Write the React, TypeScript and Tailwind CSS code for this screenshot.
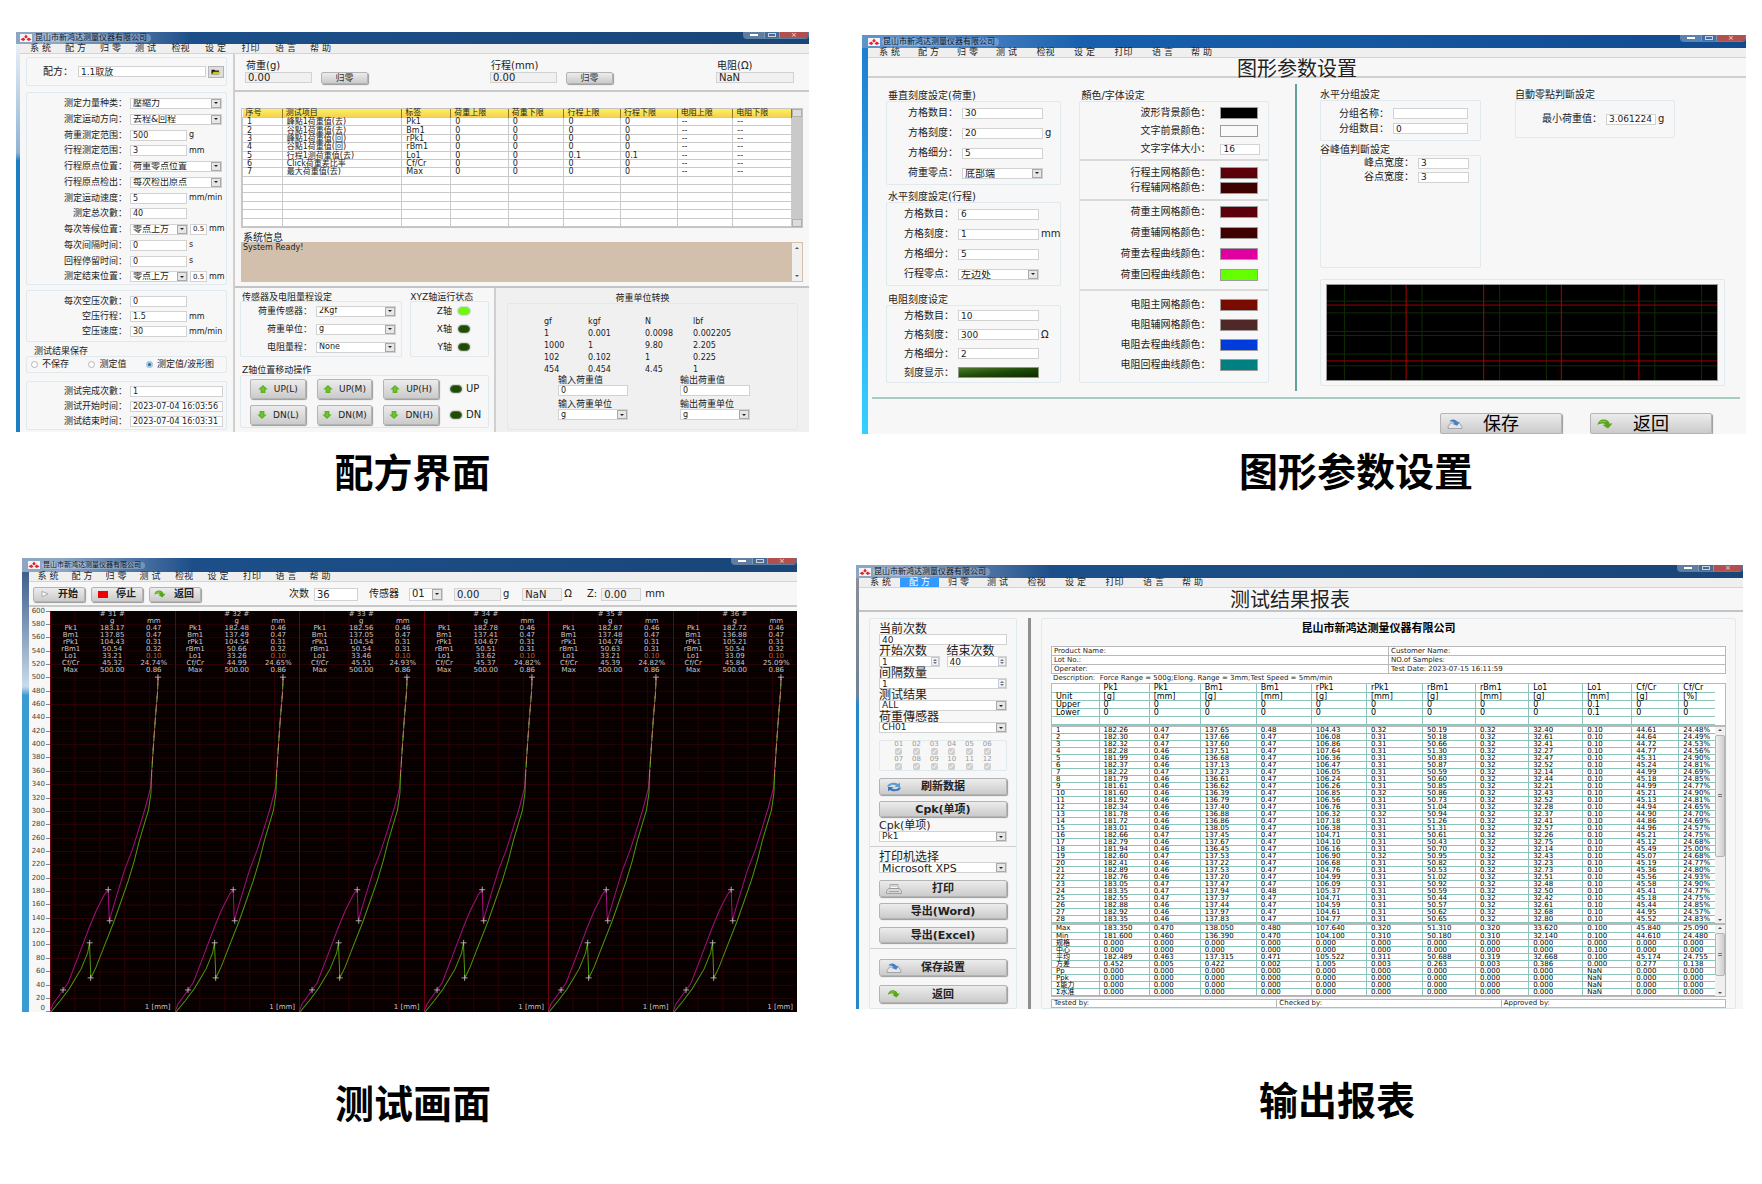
import type { ReactNode } from 'react';
import clsx from 'clsx';

const COMPANY = '昆山市新鸿达测量仪器有限公司';
const MENU = ['系 统', '配 方', '归 零', '测 试', '检视', '设 定', '打印', '语 言', '帮 助'];

/* ---------- icons ---------- */

const Logo = () => (
  <svg viewBox="0 0 12 8" className="h-2 w-3 shrink-0">
    <rect width="12" height="8" fill="#f3f3f6" />
    <path d="M6 0.5 7.8 3 6 4.6 4.2 3zM0.5 5.6 3.4 3.6 5.4 5.6 3.4 7zM11.5 5.6 8.6 3.6 6.6 5.6 8.6 7z" fill="#e0262c" />
  </svg>
);

const ArrowUp = () => (
  <svg viewBox="0 0 12 10" className="h-2 w-2.5 shrink-0">
    <path d="M6 0 12 5.5H9V10H3V5.5H0z" fill="#5fb321" />
    <path d="M6 2.5 8 5H7v3H5V5H4z" fill="#79c634" />
  </svg>
);

const ArrowDown = () => (
  <svg viewBox="0 0 12 10" className="h-2 w-2.5 shrink-0">
    <path d="M6 10 0 4.5h3V0h6v4.5h3z" fill="#5fb321" />
    <path d="M6 7.5 4 5h1V2h2v3h1z" fill="#79c634" />
  </svg>
);

const BackIcon = ({ className }: { className: string }) => (
  <svg viewBox="0 0 16 10" className={clsx('shrink-0', className)}>
    <path d="M0.5 6C1 1.500 5-0.5 9 .8c2.200.8 3.200 2.200 3.400 3.800L15.500 4.500 11 9.500 5.500 6 8.300 5.600C7.500 4 3.500 4 0.500 6z" fill="#58a618" />
    <path d="M2 4C4 1.500 8 1 10 3.300 7 2.500 4.500 2.800 2 4z" fill="#8fce55" />
  </svg>
);

const SaveIcon = ({ className }: { className: string }) => (
  <svg viewBox="0 0 16 11" className={clsx('shrink-0', className)}>
    <path d="M3 4.500h10l2.500 3.500v2.500H0.500V8z" fill="#e4e6ea" stroke="#7c838e" strokeWidth=".7" />
    <path d="M2 3C3 .3 7-.2 9.500 1.800L11 3.300 13 3 10.500 7.500 5.500 5.500 7.500 4.600C6 2.800 4 2.400 2 3z" fill="#4a7fc4" />
  </svg>
);

const RefreshIcon = () => (
  <svg viewBox="0 0 16 10" className="h-2.5 w-4 shrink-0">
    <path d="M1 4.500C2 .5 9-.5 12 2l2-1.300V5H8.500l1.800-1.300C8 2.200 4.500 2.500 3.500 4.500z" fill="#5b9bd8" />
    <path d="M15 5.500C14 9.500 7 10.500 4 8L2 9.300V5h5.500L5.700 6.300C8 7.800 11.500 7.500 12.500 5.500z" fill="#3a78bd" />
  </svg>
);

const PrinterIcon = () => (
  <svg viewBox="0 0 16 10" className="h-2.5 w-4 shrink-0">
    <path d="M4 .5h8v4H4z" fill="#fafafa" stroke="#8a8a8a" strokeWidth=".7" />
    <path d="M2.500 4.500h11L15.500 7v2.500H.5V7z" fill="#d9d9d9" stroke="#8a8a8a" strokeWidth=".7" />
    <path d="M5 2h6M3 7.500h10" stroke="#8a8a8a" strokeWidth=".7" />
  </svg>
);

const FolderIcon = () => (
  <svg viewBox="0 0 12 8" className="h-1.5 w-2.5">
    <path d="M0 1h4l1 1h5v5H0z" fill="#1c1c00" />
    <path d="M2.500 3.500H12L10 7H0.500z" fill="#c9c22a" />
  </svg>
);

/* ---------- shared controls ---------- */

type WindowProps = { menuItem: string; menuPad: string; barClass: string; edge: string; active?: number; title: string; children: ReactNode };

const Window = ({ menuItem, menuPad, barClass, edge, active, title, children }: WindowProps) => (
  <section className="overflow-hidden bg-[#f7f7f7]">
    <header className={clsx('flex items-center bg-linear-to-r', barClass)}>
      <Logo />
      <span className={clsx('ml-0.5 rounded-full bg-white/25 pr-1 pl-px whitespace-nowrap text-[#0b1526]', title)}>{COMPANY}</span>
      <div className="ml-auto flex h-[7px] self-start overflow-hidden rounded-b-sm border border-t-0 border-white/30">
        <button aria-label="最小化" className="flex w-5 items-center justify-center bg-white/30">
          <span className="h-0.5 w-2 bg-white" />
        </button>
        <button aria-label="最大化" className="flex w-4 items-center justify-center border-x border-white/30 bg-white/20">
          <span className="h-1 w-2 border border-white/70" />
        </button>
        <button aria-label="关闭" className="w-7 bg-[#b0504f] text-[7px] leading-[6px] text-white/80">
          ×
        </button>
      </div>
    </header>
    <div className="flex">
      <div className={clsx('shrink-0 bg-linear-to-b', edge)} />
      <div className="min-w-0 flex-1">
        <nav className={clsx('flex h-2.5 items-center border-b border-[#d4d4d4] bg-[#efefef] text-[9px] text-[#222]', menuPad)}>
          {MENU.map((item, i) => (
            <button key={item} className={clsx('h-full text-center whitespace-nowrap', menuItem, i === active && 'bg-[#3399ff] text-white')}>
              {item}
            </button>
          ))}
        </nav>
        {children}
      </div>
    </div>
  </section>
);

const Group = ({ className, children }: { className?: string; children?: ReactNode }) => (
  <div className={clsx('rounded-xs border border-[#e0eaee]', className)}>{children}</div>
);

const TextBox = ({ value, label, className = 'w-[57px]' }: { value: string; label?: string; className?: string }) => (
  <input
    defaultValue={value}
    aria-label={label}
    className={clsx('h-[11px] min-w-0 border border-[#d2d2d2] px-0.5', !className.includes('bg-') && 'bg-white', className)}
  />
);

const Combo = ({ value, label, className }: { value: string; label?: string; className?: string }) => (
  <span className={clsx('flex h-[11px] border border-[#d2d2d2] bg-white', className)}>
    <select aria-label={label} defaultValue={value} className="h-full min-w-0 flex-1 appearance-none bg-transparent pl-0.5">
      <option>{value}</option>
    </select>
    <span className="flex w-2.5 shrink-0 items-center justify-center border border-[#a9a9a9] bg-[#e6e6e6]">
      <span className="border-x-2 border-t-2 border-x-transparent border-t-[#222]" />
    </span>
  </span>
);

const Spin = ({ value, label, className }: { value: string; label: string; className?: string }) => (
  <span className={clsx('flex h-[11px] border border-[#d2d2d2] bg-white', className)}>
    <input aria-label={label} defaultValue={value} className="min-w-0 flex-1 px-0.5" />
    <span className="flex w-2 flex-col items-center justify-evenly border border-[#c4cbd6] bg-[#f0f2f5]">
      <span className="border-x-2 border-b-2 border-x-transparent border-b-[#6b7380]" />
      <span className="border-x-2 border-t-2 border-x-transparent border-t-[#6b7380]" />
    </span>
  </span>
);

const Field = ({ label, labelClass, rowClass, unit, children }: { label: string; labelClass: string; rowClass: string; unit?: string; children: ReactNode }) => (
  <label className={clsx('flex items-center whitespace-nowrap', rowClass)}>
    <span className={clsx('shrink-0 text-right', labelClass)}>{label}：</span>
    {children}
    {unit && <span className="ml-0.5">{unit}</span>}
  </label>
);

const PushButton = ({ className, children }: { className?: string; children: ReactNode }) => (
  <button
    className={clsx(
      'flex items-center rounded-xs border border-[#b4b4b4] bg-linear-to-b from-[#ececec] to-[#cbcbcb] whitespace-nowrap shadow-[1px_1px_1px_#9a9a9a]',
      className,
    )}
  >
    {children}
  </button>
);

const Led = ({ on }: { on?: boolean }) => (
  <span className={clsx('h-2 w-3 shrink-0 rounded-full border shadow-[0_0_1px_1px_#d8d8d8]', on ? 'border-[#8fdc5f] bg-[#66ff00]' : 'border-[#4f6a45] bg-[#1e4d00]')} />
);

/* ---------- recipe window ---------- */

type RecipeRow = { label: string; value: string; unit?: string; kind?: 'select' | 'combo' };

const RECIPE_ROWS: RecipeRow[] = [
  { label: '测定力量种类', value: '壓縮力', kind: 'select' },
  { label: '测定运动方向', value: '去程&回程', kind: 'select' },
  { label: '荷重测定范围', value: '500', unit: 'g' },
  { label: '行程测定范围', value: '3', unit: 'mm' },
  { label: '行程原点位置', value: '荷重零点位置', kind: 'select' },
  { label: '行程原点检出', value: '每次检出原点', kind: 'select' },
  { label: '测定运动速度', value: '5', unit: 'mm/min' },
  { label: '测定总次數', value: '40' },
  { label: '每次等候位置', value: '零点上方', unit: 'mm', kind: 'combo' },
  { label: '每次间隔时间', value: '0', unit: 's' },
  { label: '回程停留时间', value: '0', unit: 's' },
  { label: '测定结束位置', value: '零点上方', unit: 'mm', kind: 'combo' },
];

const AIR_ROWS: RecipeRow[] = [
  { label: '每次空压次數', value: '0' },
  { label: '空压行程', value: '1.5', unit: 'mm' },
  { label: '空压速度', value: '30', unit: 'mm/min' },
];

const DONE_ROWS = [
  ['测试完成次數', '1'],
  ['测试开始时间', '2023-07-04 16:03:56'],
  ['测试结束时间', '2023-07-04 16:03:31'],
];

const ITEM_HEAD = ['序号', '测试项目', '标签', '荷重上限', '荷重下限', '行程上限', '行程下限', '电阻上限', '电阻下限'];
const ITEM_COLS = ['w-10', 'w-[120px]', 'w-[49px]', 'w-[58px]', 'w-[56px]', 'w-[57px]', 'w-[57px]', 'w-[56px]', 'w-[59px]'];
const ITEMS = [
  ['1', '峰點1荷重值(去)', 'Pk1', '0', '0', '0', '0', '--', '--'],
  ['2', '谷點1荷重值(去)', 'Bm1', '0', '0', '0', '0', '--', '--'],
  ['3', '峰點1荷重值(回)', 'rPk1', '0', '0', '0', '0', '--', '--'],
  ['4', '谷點1荷重值(回)', 'rBm1', '0', '0', '0', '0', '--', '--'],
  ['5', '行程1测荷重值(去)', 'Lo1', '0', '0', '0.1', '0.1', '--', '--'],
  ['6', 'Click荷重差比率', 'Cf/Cr', '0', '0', '0', '0', '--', '--'],
  ['7', '最大荷重值(去)', 'Max', '0', '0', '0', '0', '--', '--'],
  ...Array.from({ length: 6 }, () => Array<string>(9).fill('\u00a0')),
];

const UNITS = [
  ['1', '0.001', '0.0098', '0.002205'],
  ['1000', '1', '9.80', '2.205'],
  ['102', '0.102', '1', '0.225'],
  ['454', '0.454', '4.45', '1'],
];

const RecipeField = ({ row, rowClass }: { row: RecipeRow; rowClass: string }) => (
  <Field label={row.label} labelClass="w-[100px] mr-[3px] text-[9px]" rowClass={rowClass} unit={row.unit}>
    {row.kind === 'select' && <Combo value={row.value} className="w-[92px] text-[9px]" />}
    {row.kind === 'combo' && (
      <>
        <Combo value={row.value} className="w-[58px] text-[9px]" />
        <TextBox value="0.5" label={`${row.label}值`} className="ml-0.5 w-[17px] text-[7px]" />
      </>
    )}
    {!row.kind && <TextBox value={row.value} />}
  </Field>
);

const Reading = ({ label, value, zero, box }: { label: string; value: string; zero?: boolean; box: string }) => (
  <div>
    <label>
      <span className="flex h-2.5 items-center pl-px text-[10px]">{label}</span>
      <TextBox value={value} className={clsx('mt-px h-3 bg-[#f0f0f0] text-[10px]', box)} />
    </label>
    {zero && (
      <button className="mt-px ml-[9px] h-3 w-[47px] rounded-xs border border-[#b4b4b4] bg-linear-to-b from-[#ececec] to-[#cbcbcb] align-top text-[9px] leading-[10px] text-[#333] shadow-[1px_1px_1px_#9a9a9a]">
        归零
      </button>
    )}
  </div>
);

const RecipeWindow = () => (
  <Window
    edge="w-1 from-[#e9eff6] via-[#8fb3d6] via-28% to-[#1c7fc4] to-30%"
    barClass="h-3 pl-1 from-[#8ea6c4] from-5% via-[#1c4f8a] via-22% to-[#1a4677]"
    title="text-[8px]"
    menuPad="pl-[3px]"
    menuItem="w-[35px]"
  >
    <div className="grid grid-cols-[213fr_576fr] text-[8px] text-[#222]">
      <div className="px-1.5 pt-[3px] pb-0.5">
        <Group className="flex h-[29px] items-center pl-4">
          <Field label="配方" labelClass="text-[10px] w-[30px] mr-[5px]" rowClass="">
            <TextBox value="1.1取放" className="w-[128px] text-[9px]" />
          </Field>
          <button aria-label="打开配方" className="ml-0.5 flex h-3 w-4 items-center justify-center border border-[#b4b4b4] bg-[#dedede]">
            <FolderIcon />
          </button>
        </Group>
        <Group className="mt-1.5 pt-0.5">
          {RECIPE_ROWS.map((row, i) => (
            <RecipeField key={row.label} row={row} rowClass={i % 4 === 3 ? 'h-[15px]' : 'h-4'} />
          ))}
        </Group>
        <Group className="mt-[5px] pt-[3px] pb-0.5">
          {AIR_ROWS.map((row) => (
            <RecipeField key={row.label} row={row} rowClass="h-[15px]" />
          ))}
        </Group>
        <p className="mt-1 flex h-2.5 items-center pl-2 text-[9px]">测试结果保存</p>
        <Group className="flex h-[17px] items-center justify-between pr-3 pl-1 text-[9px]">
          {['不保存', '测定值', '测定值/波形图'].map((name, i) => (
            <label key={name} className="flex items-center gap-1">
              <input
                type="radio"
                name="save"
                defaultChecked={i === 2}
                className="size-[7px] appearance-none rounded-full border border-[#b5b5b5] bg-white checked:border-2 checked:border-[#a9c8dc] checked:bg-[#176fa5]"
              />
              {name}
            </label>
          ))}
        </Group>
        <Group className="mt-2 pt-0.5">
          {DONE_ROWS.map(([label, value]) => (
            <Field key={label} label={label} labelClass="w-[100px] mr-[3px] text-[9px]" rowClass="h-[15px]">
              <TextBox value={value} className="w-[93px]" />
            </Field>
          ))}
        </Group>
      </div>

      <div className="flex flex-col border-l-2 border-[#cfcfcf]">
        <div className="grid h-[38px] grid-cols-[245fr_226fr_93fr] border-b-2 border-[#c9c9c9] pt-[7px] pl-2.5">
          <Reading label="荷重(g)" value="0.00" zero box="w-[67px]" />
          <Reading label="行程(mm)" value="0.00" zero box="w-[67px]" />
          <Reading label="电阻(Ω)" value="NaN" box="w-[78px]" />
        </div>
        <div className="border-b-2 border-[#c4c4c4] px-1.5 pt-4 pb-1">
          <div className="flex border border-[#c4c4c4]">
            <table className="h-[118px] flex-1 table-fixed border-collapse bg-white">
              <thead>
                <tr className="bg-linear-to-b from-[#fff05a] to-[#f3cf52] text-left">
                  {ITEM_HEAD.map((head, i) => (
                    <th key={head} className={clsx('border-r border-[#8c7a2a] p-0 pl-[3px] leading-2 font-normal', ITEM_COLS[i])}>
                      {head}
                    </th>
                  ))}
                </tr>
              </thead>
              <tbody>
                {ITEMS.map((row, r) => (
                  <tr key={r}>
                    {row.map((cell, i) => (
                      <td key={i} className="border border-[#c9c9c9] p-0 pl-1 leading-[7px] whitespace-nowrap">
                        {cell}
                      </td>
                    ))}
                  </tr>
                ))}
              </tbody>
            </table>
            <div className="flex w-2.5 shrink-0 flex-col justify-between bg-[#c9c9c9]">
              <span className="h-2 border border-[#b0b0b0] bg-[#dcdcdc]" />
              <span className="h-2 border border-[#b0b0b0] bg-[#dcdcdc]" />
            </div>
          </div>
          <label>
            <span className="mt-[5px] flex h-[9px] items-center pl-0.5 text-[10px]">系统信息</span>
            <span className="flex h-10">
              <textarea readOnly value="System Ready!" className="flex-1 resize-none bg-[#d2bfac] p-0.5" />
              <span className="flex w-3 flex-col items-center justify-between border border-[#d2bfac] bg-[#f0f0f0] py-1">
                <span className="border-x-2 border-b-2 border-x-transparent border-b-[#555]" />
                <span className="border-x-2 border-t-2 border-x-transparent border-t-[#555]" />
              </span>
            </span>
          </label>
        </div>

        <div className="grid flex-1 grid-cols-[259fr_315fr]">
          <div className="px-[5px] pt-[5px] pb-0.5">
            <div className="grid grid-cols-[161fr_78fr] gap-x-2">
              <div>
                <p className="h-2 pl-0.5 text-[9px]">传感器及电阻量程设定</p>
                <Group>
                  {[
                    ['荷重传感器', '2Kgf'],
                    ['荷重单位', 'g'],
                    ['电阻量程', 'None'],
                  ].map(([label, value]) => (
                    <Field key={label} label={label} labelClass="w-[71px] mr-1 text-[9px]" rowClass="h-[18px]">
                      <Combo value={value} className="w-20" />
                    </Field>
                  ))}
                </Group>
              </div>
              <div>
                <p className="h-2 text-[9px] whitespace-nowrap">XYZ轴运行状态</p>
                <Group>
                  {['Z轴', 'X轴', 'Y轴'].map((axis) => (
                    <div key={axis} className="flex h-[18px] items-center justify-end gap-1.5 pr-[18px] text-[9px]">
                      {axis}
                      <Led on={axis === 'Z轴'} />
                    </div>
                  ))}
                </Group>
              </div>
            </div>
            <p className="mt-[9px] flex h-[9px] items-center pl-0.5 text-[9px]">Z轴位置移动操作</p>
            <Group className="flex flex-col gap-1.5 pt-[3px] pb-0.5 pl-[9px]">
              {['UP', 'DN'].map((dir) => (
                <div key={dir} className="flex items-center gap-[11px]">
                  {['L', 'M', 'H'].map((speed) => (
                    <PushButton key={speed} className="h-5 flex-1 justify-center gap-1.5 text-[9px]">
                      {dir === 'UP' ? <ArrowUp /> : <ArrowDown />}
                      {`${dir}(${speed})`}
                    </PushButton>
                  ))}
                  <span className="flex w-[38px] items-center gap-1 text-[10px]">
                    <Led />
                    {dir}
                  </span>
                </div>
              ))}
            </Group>
          </div>

          <div className="flex flex-col border-l-2 border-[#cfcfcf] bg-[#f0f0f0] px-[11px] pt-1.5 pb-0.5">
            <p className="h-[9px] pr-5 text-center text-[9px]">荷重单位转换</p>
            <Group className="flex-1 pt-3">
              <table className="ml-[36px] table-fixed border-collapse text-left">
                <thead>
                  <tr className="h-3">
                    <th className="w-11 p-0 font-normal">gf</th>
                    <th className="w-[57px] p-0 font-normal">kgf</th>
                    <th className="w-12 p-0 font-normal">N</th>
                    <th className="w-[60px] p-0 font-normal">lbf</th>
                  </tr>
                </thead>
                <tbody>
                  {UNITS.map((row) => (
                    <tr key={row[0]} className="h-3">
                      {row.map((cell, i) => (
                        <td key={i} className="p-0">
                          {cell}
                        </td>
                      ))}
                    </tr>
                  ))}
                </tbody>
              </table>
              <div className="grid grid-cols-[123fr_118fr] pl-[50px]">
                {['输入', '輸出'].map((side) => (
                  <div key={side}>
                    <label>
                      <span className="flex h-[9px] items-center text-[9px]">{side}荷重值</span>
                      <TextBox value="0" className="block w-[70px]" />
                    </label>
                    <label>
                      <span className="mt-1 flex h-[9px] items-center text-[9px]">{side}荷重单位</span>
                      <Combo value="g" className="w-[70px]" />
                    </label>
                  </div>
                ))}
              </div>
            </Group>
          </div>
        </div>
      </div>
    </div>
  </Window>
);

/* ---------- graph settings window ---------- */

const COLOR_SECTIONS = [
  {
    box: 'pt-0.5 pb-px',
    row: 'h-[18px]',
    rows: [
      ['波形背景颜色', 'bg-black'],
      ['文字前景颜色', 'bg-[#fafafa]'],
      ['文字字体大小', ''],
    ],
  },
  {
    box: 'border-t-2 pt-1 pb-1',
    row: 'h-[15px]',
    rows: [
      ['行程主网格颜色', 'bg-[#5c000c]'],
      ['行程辅网格颜色', 'bg-[#3f0000]'],
    ],
  },
  {
    box: 'border-t-2 pb-1',
    row: 'h-[21px]',
    rows: [
      ['荷重主网格颜色', 'bg-[#5c000c]'],
      ['荷重辅网格颜色', 'bg-[#3f0000]'],
      ['荷重去程曲线颜色', 'bg-[#e000a0]'],
      ['荷重回程曲线颜色', 'bg-[#66ff00]'],
    ],
  },
  {
    box: 'border-t-2 pt-1 pb-[7px]',
    row: 'h-5',
    rows: [
      ['电阻主网格颜色', 'bg-[#780c00]'],
      ['电阻辅网格颜色', 'bg-[#502828]'],
      ['电阻去程曲线颜色', 'bg-[#003cdc]'],
      ['电阻回程曲线颜色', 'bg-[#008080]'],
    ],
  },
];

const ScaleGroup = ({ title, zero, values, unit, narrow }: { title: string; zero: [string, string]; values: string[]; unit: string; narrow: string }) => (
  <>
    <p className="flex h-2.5 items-center pl-0.5">{title}</p>
    <Group className="py-px">
      {['方格数目', '方格刻度', '方格细分'].map((name, i) => (
        <Field key={name} label={name} labelClass={narrow} rowClass="h-5" unit={i === 1 ? unit : undefined}>
          <TextBox value={values[i]} className="w-[81px] text-[9px]" />
        </Field>
      ))}
      <Field label={zero[0]} labelClass={narrow} rowClass="h-5">
        <Combo value={zero[1]} className="w-[81px]" />
      </Field>
    </Group>
  </>
);

const GridPreview = () => (
  <svg viewBox="0 0 392 97" preserveAspectRatio="none" className="block h-[97px] w-full border border-[#9a9a9a] bg-black">
    <path
      d="M17.500 0V97M64.500 0V97M95.500 0V97M173.500 0V97M220.500 0V97M298.500 0V97M329.500 0V97M376.500 0V97M0 16.500H392M0 28.500H392M0 47.500H392M0 51.500H392M0 70.500H392M0 82.500H392"
      stroke="#0f2e00"
    />
    <path d="M79.500 0V97M157.500 0V97M235.500 0V97M313.500 0V97" stroke="#b40000" />
    <path d="M0 20.500H392M0 77.500H392" stroke="#a00000" />
  </svg>
);

const GraphWindow = () => (
  <Window
    edge="w-1.5 from-[#1f7fd0] via-[#2ba6ea] to-[#35d0ff]"
    barClass="h-[13px] pl-1.5 from-[#5f93cc] from-5% via-[#1660ae] via-25% to-[#124a8e]"
    title="text-[8px]"
    menuPad="pl-0.5"
    menuItem="w-[39px]"
  >
    <h2 className="flex h-5 items-center justify-center border-b-2 border-[#d0d0d0] pt-1 pr-5 text-xl leading-none text-[#222]">图形参数设置</h2>
    <div className="grid grid-cols-[192fr_216fr_452fr] pt-1.5 pl-[18px] text-[10px] text-[#222]">
      <div className="pt-[7px] pr-[18px]">
        <ScaleGroup title="垂直刻度設定(荷重)" values={['30', '20', '5']} unit="g" zero={['荷重零点', '底部端']} narrow="w-[71px] mr-1" />
        <div className="mt-[7px]" />
        <ScaleGroup title="水平刻度設定(行程)" values={['6', '1', '5']} unit="mm" zero={['行程零点', '左边处']} narrow="w-[67px] mr-1" />
        <p className="mt-[9px] flex h-2.5 items-center pl-0.5">电阻刻度设定</p>
        <Group>
          {[
            ['方格数目', '10'],
            ['方格刻度', '300'],
            ['方格细分', '2'],
          ].map(([name, value], i) => (
            <Field key={name} label={name} labelClass="w-[67px] mr-1" rowClass="h-[19px]" unit={i === 1 ? 'Ω' : undefined}>
              <TextBox value={value} className="w-[81px] text-[9px]" />
            </Field>
          ))}
          <Field label="刻度显示" labelClass="w-[67px] mr-1" rowClass="h-[19px]">
            <button aria-label="刻度显示" className="h-[11px] w-[81px] border border-[#8a9a80] bg-linear-to-br from-[#4d7a2c] via-[#1f4a0a] to-[#102a02]" />
          </Field>
        </Group>
      </div>

      <div className="pt-[7px] pr-[26px]">
        <p className="flex h-2.5 items-center pl-0.5">顏色/字体设定</p>
        <Group>
          {COLOR_SECTIONS.map((section) => (
            <div key={section.row} className={clsx('border-[#dadada]', section.box)}>
              {section.rows.map(([name, swatch]) => (
                <Field key={name} label={name} labelClass="w-[130px] mr-2.5" rowClass={section.row}>
                  {swatch ? (
                    <button aria-label={name} className={clsx('h-3 w-[38px] border border-[#9c9c9c]', swatch)} />
                  ) : (
                    <TextBox value="16" className="w-10 text-[9px]" />
                  )}
                </Field>
              ))}
            </div>
          ))}
        </Group>
      </div>

      <div className="border-l-2 border-[#63a097] pt-1.5 pr-[21px] pb-[5px] pl-[23px]">
        <div className="mr-[50px] grid grid-cols-[161fr_160fr] gap-x-[34px]">
          <div>
            <p className="flex h-2.5 items-center">水平分组設定</p>
            <Group className="pt-[5px] pb-1">
              <Field label="分组名称" labelClass="w-[68px] mr-1" rowClass="h-[15px]">
                <TextBox value="" className="w-[75px] text-[9px]" />
              </Field>
              <Field label="分组数目" labelClass="w-[68px] mr-1" rowClass="h-[15px]">
                <TextBox value="0" className="w-[75px] text-[9px]" />
              </Field>
            </Group>
            <p className="mt-1 flex h-2.5 items-center">谷峰值判斷設定</p>
            <Group className="h-[113px]">
              <Field label="峰点宽度" labelClass="w-[93px] mr-1" rowClass="h-3.5">
                <TextBox value="3" className="w-[51px] text-[9px]" />
              </Field>
              <Field label="谷点宽度" labelClass="w-[93px] mr-1" rowClass="h-3.5">
                <TextBox value="3" className="w-[51px] text-[9px]" />
              </Field>
            </Group>
          </div>
          <div>
            <p className="flex h-2.5 items-center">自動零點判斷設定</p>
            <Group className="flex h-[38px] items-center">
              <Field label="最小荷重值" labelClass="w-[86px] mr-1" rowClass="" unit="g">
                <TextBox value="3.061224" className="w-[50px] text-[9px]" />
              </Field>
            </Group>
          </div>
        </div>
        <Group className="mt-[11px] py-1 pr-1.5 pl-[5px]">
          <GridPreview />
        </Group>
      </div>
    </div>
    <hr className="mt-1.5 mr-1.5 ml-1 border-t-2 border-[#a9cbc6]" />
    <div className="flex justify-end gap-7 pt-3.5 pr-[34px]">
      <PushButton className="h-[21px] w-[122px] gap-5 pl-1.5 text-lg leading-none">
        <SaveIcon className="h-2.5 w-4" />
        保存
      </PushButton>
      <PushButton className="h-[21px] w-[122px] gap-5 pl-1.5 text-lg leading-none">
        <BackIcon className="h-2.5 w-4" />
        返回
      </PushButton>
    </div>
  </Window>
);

/* ---------- test window ---------- */

const SHOTS = [
  { no: 31, g: ['183.17', '137.85', '104.43', '50.54', '33.21', '45.32', '500.00'], mm: ['0.47', '0.47', '0.31', '0.32', '0.10', '24.74%', '0.86'] },
  { no: 32, g: ['182.48', '137.49', '104.54', '50.66', '33.26', '44.99', '500.00'], mm: ['0.46', '0.47', '0.31', '0.32', '0.10', '24.65%', '0.86'] },
  { no: 33, g: ['182.56', '137.05', '104.54', '50.54', '33.46', '45.51', '500.00'], mm: ['0.46', '0.47', '0.31', '0.31', '0.10', '24.93%', '0.86'] },
  { no: 34, g: ['182.78', '137.41', '104.67', '50.51', '33.62', '45.37', '500.00'], mm: ['0.46', '0.47', '0.31', '0.31', '0.10', '24.82%', '0.86'] },
  { no: 35, g: ['182.87', '137.48', '104.76', '50.63', '33.21', '45.39', '500.00'], mm: ['0.46', '0.47', '0.31', '0.31', '0.10', '24.82%', '0.86'] },
  { no: 36, g: ['182.72', '136.88', '105.21', '50.54', '33.09', '45.84', '500.00'], mm: ['0.46', '0.47', '0.31', '0.32', '0.10', '25.09%', '0.86'] },
];
const SHOT_LABELS = ['Pk1', 'Bm1', 'rPk1', 'rBm1', 'Lo1', 'Cf/Cr', 'Max'];
const TICKS = Array.from({ length: 31 }, (_, i) => 600 - i * 20);
const MARKS = [[13, 378], [58, 278], [59.5, 309], [39.5, 331], [40.5, 366], [107.5, 66]];

const Curve = () => (
  <svg viewBox="0 0 124 400" preserveAspectRatio="none" className="absolute inset-0 size-full" fill="none">
    {Array.from({ length: 150 }, (_, i) => (
      <line key={i} x1="0" x2="124" y1={(i * 8) / 3} y2={(i * 8) / 3} stroke={i % 5 ? '#130000' : '#2e0005'} strokeWidth={i % 5 ? 0.8 : 1} />
    ))}
    <path d="M24.800 0V400M49.600 0V400M74.400 0V400M99.200 0V400" stroke="#2e0004" />
    <path d="M0.500 0V400" stroke="#70000f" />
    <path
      d="M0 400 3 392 13 378 18 371 28 345 39 316 46 299 54 283 58 278 59 309 64 292 74 259 82 238 88 219 95 196 100 177 102.700 139 105 106 107 82 107.700 66"
      stroke="#a3107c"
    />
    <path
      d="M1 400 10 389 19 377 25 367 31 357 37.500 341 39.300 331 40.700 366 46 355 51 342 64 309 71 289 78 269 84 249 89 229 98 199 100.500 182 101 169"
      stroke="#4b9a08"
    />
    <path d="M101 169 102.700 139 105 106 107 82 107.700 66" stroke="#3fae08" strokeDasharray="6 7" />
    <path d="M101 165 102.700 139 105 106 107 82 107.700 66" stroke="#a88a4e" strokeDasharray="7 6" />
    {MARKS.map(([x, y]) => (
      <path key={y} d={`M${x - 3} ${y}h6M${x} ${y - 3}v6`} stroke="#c9c9c9" strokeWidth=".8" />
    ))}
  </svg>
);

const TestWindow = () => (
  <Window
    edge="w-[7px] from-[#3f5f8a] via-[#c9dcea] via-26% to-[#3a9ad2] to-28%"
    barClass="h-3.5 pl-1.5 from-[#8ea6c4] from-5% via-[#1c4f8a] via-22% to-[#1a4677]"
    title="text-[7px]"
    menuPad="pl-0.5"
    menuItem="w-[34px]"
  >
    <div className="flex h-[25px] items-center border-b-2 border-[#c9c9c9] pt-px pl-1 text-[10px] whitespace-nowrap text-[#222]">
      <PushButton className="h-[15px] w-[52px] gap-2 pl-1.5 font-bold">
        <svg viewBox="0 0 10 8" className="h-1.5 w-2.5 shrink-0">
          <path d="M1 .5 9 4 1 7.500z" fill="#fafafa" stroke="#9a9a9a" />
        </svg>
        开始
      </PushButton>
      <PushButton className="ml-1.5 h-[15px] w-[52px] gap-2 pl-1.5 font-bold">
        <span className="h-[7px] w-2.5 bg-[#f00000]" />
        停止
      </PushButton>
      <PushButton className="ml-1.5 h-[15px] w-[52px] gap-2 pl-1 font-bold">
        <BackIcon className="h-2 w-3" />
        返回
      </PushButton>
      <label className="ml-[88px] flex items-center gap-[5px]">
        次数
        <TextBox value="36" className="h-[13px] w-11" />
      </label>
      <label className="ml-[11px] flex items-center gap-2.5">
        传感器
        <Combo value="01" className="h-[13px] w-[34px]" />
      </label>
      <label className="ml-[11px] flex items-center gap-0.5">
        <TextBox value="0.00" className="h-[13px] w-[47px] bg-[#f0f0f0]" />g
      </label>
      <label className="ml-[13px] flex items-center gap-0.5">
        <TextBox value="NaN" className="h-[13px] w-10 bg-[#f0f0f0]" />Ω
      </label>
      <label className="ml-[15px] flex items-center gap-1">
        Z:
        <TextBox value="0.00" className="h-[13px] w-10 bg-[#f0f0f0]" />
        mm
      </label>
    </div>
    <div className="mt-1 flex h-[401px]">
      <div className="flex w-[21px] shrink-0 flex-col justify-between text-[7px] text-[#444]">
        {TICKS.map((tick) => (
          <div key={tick} className="flex h-0 items-center justify-end gap-px last:items-end">
            {tick}
            <span className="h-px w-1 bg-[#888]" />
          </div>
        ))}
      </div>
      <div className="grid flex-1 grid-cols-6 bg-[#050000]">
        {SHOTS.map((shot) => (
          <div key={shot.no} className="relative flex flex-col justify-between text-[7px] text-[#c8c8c8]">
            <Curve />
            <table className="relative w-full table-fixed border-collapse text-center leading-[7px]">
              <thead>
                <tr>
                  <th colSpan={3} className="p-0 font-normal">
                    # {shot.no} #
                  </th>
                </tr>
                <tr>
                  <th className="p-0" />
                  <th className="p-0 font-normal">g</th>
                  <th className="p-0 font-normal">mm</th>
                </tr>
              </thead>
              <tbody>
                {SHOT_LABELS.map((name, i) => (
                  <tr key={name}>
                    <th className="p-0 font-normal">{name}</th>
                    <td className="p-0">{shot.g[i]}</td>
                    <td className={clsx('p-0', name === 'Lo1' && 'text-[#c85a14]')}>{shot.mm[i]}</td>
                  </tr>
                ))}
              </tbody>
            </table>
            <p className="relative pr-1 pb-px text-right">1 [mm]</p>
          </div>
        ))}
      </div>
    </div>
  </Window>
);

/* ---------- report window ---------- */

const REPORT_COLS = ['w-[47px]', 'w-[50px]', 'w-[51px]', 'w-[56px]', 'w-[55px]', 'w-[55px]', 'w-[56px]', 'w-[53px]', 'w-[53px]', 'w-[54px]', 'w-[49px]', 'w-[47px]', 'w-[36px]'];

const parse = (text: string) =>
  text
    .trim()
    .split('\n')
    .map((line) => line.trim().split(' '));

const REPORT_HEAD = [
  ['', 'Pk1', 'Pk1', 'Bm1', 'Bm1', 'rPk1', 'rPk1', 'rBm1', 'rBm1', 'Lo1', 'Lo1', 'Cf/Cr', 'Cf/Cr'],
  ['Unit', '[g]', '[mm]', '[g]', '[mm]', '[g]', '[mm]', '[g]', '[mm]', '[g]', '[mm]', '[g]', '[%]'],
  ['Upper', '0', '0', '0', '0', '0', '0', '0', '0', '0', '0.1', '0', '0'],
  ['Lower', '0', '0', '0', '0', '0', '0', '0', '0', '0', '0.1', '0', '0'],
  Array<string>(13).fill(''),
];

const REPORT_ROWS = parse(`
  1 182.26 0.47 137.65 0.48 104.43 0.32 50.19 0.32 32.40 0.10 44.61 24.48%
  2 182.30 0.47 137.66 0.47 106.08 0.31 50.18 0.32 32.61 0.10 44.64 24.49%
  3 182.32 0.47 137.60 0.47 106.86 0.31 50.66 0.32 32.41 0.10 44.72 24.53%
  4 182.28 0.46 137.51 0.47 107.64 0.31 51.30 0.32 32.27 0.10 44.77 24.56%
  5 181.99 0.46 136.68 0.47 106.36 0.31 50.83 0.32 32.47 0.10 45.31 24.90%
  6 182.37 0.46 137.13 0.47 106.47 0.31 50.87 0.32 32.52 0.10 45.24 24.81%
  7 182.22 0.47 137.23 0.47 106.05 0.31 50.59 0.32 32.14 0.10 44.99 24.69%
  8 181.79 0.46 136.61 0.47 106.24 0.31 50.60 0.32 32.44 0.10 45.18 24.85%
  9 181.61 0.46 136.62 0.47 106.26 0.31 50.85 0.32 32.21 0.10 44.99 24.77%
  10 181.60 0.46 136.39 0.47 106.85 0.32 50.86 0.32 32.43 0.10 45.21 24.90%
  11 181.92 0.46 136.79 0.47 106.56 0.31 50.73 0.32 32.52 0.10 45.13 24.81%
  12 182.34 0.46 137.40 0.47 106.76 0.31 51.04 0.32 32.28 0.10 44.94 24.65%
  13 181.78 0.46 136.88 0.47 106.32 0.32 50.94 0.32 32.37 0.10 44.90 24.70%
  14 181.72 0.46 136.86 0.47 107.18 0.31 51.26 0.32 32.41 0.10 44.86 24.69%
  15 183.01 0.46 138.05 0.47 106.38 0.31 51.31 0.32 32.57 0.10 44.96 24.57%
  16 182.66 0.47 137.45 0.47 104.71 0.31 50.61 0.32 32.26 0.10 45.21 24.75%
  17 182.79 0.46 137.67 0.47 104.10 0.31 50.43 0.32 32.75 0.10 45.12 24.68%
  18 181.94 0.46 136.45 0.47 106.16 0.31 50.70 0.32 32.14 0.10 45.49 25.00%
  19 182.60 0.47 137.53 0.47 106.90 0.32 50.95 0.32 32.43 0.10 45.07 24.68%
  20 182.41 0.46 137.22 0.47 106.68 0.31 50.82 0.32 32.23 0.10 45.19 24.77%
  21 182.89 0.46 137.53 0.47 104.76 0.31 50.53 0.32 32.73 0.10 45.36 24.80%
  22 182.76 0.46 137.20 0.47 104.99 0.31 51.02 0.32 32.51 0.10 45.56 24.93%
  23 183.05 0.47 137.47 0.47 106.09 0.31 50.92 0.32 32.48 0.10 45.58 24.90%
  24 183.35 0.47 137.94 0.48 105.37 0.31 50.59 0.32 32.50 0.10 45.41 24.77%
  25 182.55 0.47 137.37 0.47 104.71 0.31 50.44 0.32 32.42 0.10 45.18 24.75%
  26 182.88 0.46 137.44 0.47 104.59 0.31 50.57 0.32 32.61 0.10 45.44 24.85%
  27 182.92 0.46 137.97 0.47 104.61 0.31 50.62 0.32 32.68 0.10 44.95 24.57%
  28 183.35 0.46 137.83 0.47 104.77 0.31 50.65 0.32 32.80 0.10 45.52 24.83%
`);

const REPORT_STATS = parse(`
  Max 183.350 0.470 138.050 0.480 107.640 0.320 51.310 0.320 33.620 0.100 45.840 25.090
  Min 181.600 0.460 136.390 0.470 104.100 0.310 50.180 0.310 32.140 0.100 44.610 24.480
  规格 0.000 0.000 0.000 0.000 0.000 0.000 0.000 0.000 0.000 0.000 0.000 0.000
  中心 0.000 0.000 0.000 0.000 0.000 0.000 0.000 0.000 0.000 0.100 0.000 0.000
  平均 182.489 0.463 137.315 0.471 105.522 0.311 50.688 0.319 32.668 0.100 45.174 24.755
  方差 0.452 0.005 0.422 0.002 1.005 0.003 0.263 0.003 0.386 0.000 0.277 0.138
  Pp 0.000 0.000 0.000 0.000 0.000 0.000 0.000 0.000 0.000 NaN 0.000 0.000
  Ppk 0.000 0.000 0.000 0.000 0.000 0.000 0.000 0.000 0.000 NaN 0.000 0.000
  Σ能力 0.000 0.000 0.000 0.000 0.000 0.000 0.000 0.000 0.000 NaN 0.000 0.000
  Σ水准 0.000 0.000 0.000 0.000 0.000 0.000 0.000 0.000 0.000 NaN 0.000 0.000
`);

const ReportTable = ({ rows, cell, thumb }: { rows: string[][]; cell: string; thumb?: string }) => (
  <div className="flex border border-[#b9b9bd] bg-white text-black">
    <table className="w-0 flex-1 table-fixed border-collapse">
      <colgroup>
        {REPORT_COLS.map((width, i) => (
          <col key={i} className={width} />
        ))}
      </colgroup>
      <tbody>
        {rows.map((row, r) => (
          <tr key={r}>
            {row.map((value, i) => (
              <td key={i} className={clsx('border-b border-[#8cc4bb] p-0 pl-1 whitespace-nowrap', i > 0 && 'border-l', cell)}>
                {value}
              </td>
            ))}
          </tr>
        ))}
      </tbody>
    </table>
    {thumb ? (
      <div className="flex w-2.5 shrink-0 flex-col items-center bg-[#f0f0f0] py-0.5">
        <span className="border-x-2 border-b-2 border-x-transparent border-b-[#555]" />
        <span className={clsx('mt-1 flex w-full flex-col items-center justify-center gap-px rounded-xs border border-[#b5b5b5] bg-linear-to-r from-[#f0f0f0] to-[#cfcfcf]', thumb)}>
          <span className="h-px w-1 bg-[#777]" />
          <span className="h-px w-1 bg-[#777]" />
        </span>
        <span className="mt-auto border-x-2 border-t-2 border-x-transparent border-t-[#555]" />
      </div>
    ) : (
      <div className="w-2.5 shrink-0" />
    )}
  </div>
);

const SideLabel = ({ text }: { text: string }) => <span className="flex h-[11px] items-center text-xs leading-none">{text}</span>;

const SideButton = ({ icon, text, className }: { icon?: ReactNode; text: string; className: string }) => (
  <PushButton className={clsx('w-full px-1.5 text-[11px] font-bold', className)}>
    {icon}
    <span className={clsx('flex-1 text-center', icon && 'pr-4')}>{text}</span>
  </PushButton>
);

const ReportSidebar = () => (
  <Group className="w-[148px] shrink-0 px-[9px] pt-1 pb-[5px] text-[9px]">
    <label>
      <SideLabel text="当前次数" />
      <TextBox value="40" className="block w-full" />
    </label>
    <div className="grid grid-cols-2 gap-x-[7px]">
      <label>
        <SideLabel text="开始次数" />
        <Spin label="开始次数" value="1" />
      </label>
      <label>
        <SideLabel text="结束次数" />
        <Spin label="结束次数" value="40" />
      </label>
    </div>
    <label>
      <SideLabel text="间隔数量" />
      <Spin label="间隔数量" value="1" />
    </label>
    <label>
      <SideLabel text="测试结果" />
      <Combo value="ALL" />
    </label>
    <label>
      <SideLabel text="荷重傳感器" />
      <Combo value="CH01" />
    </label>
    <Group className="mt-[7px] grid grid-cols-6 gap-y-px px-2.5 text-[7px] text-[#999]">
      {Array.from({ length: 12 }, (_, i) => String(i + 1).padStart(2, '0')).map((no) => (
        <label key={no} className="flex flex-col items-center">
          <span className="h-[7px]">{no}</span>
          <input type="checkbox" defaultChecked disabled className="size-[7px]" />
        </label>
      ))}
    </Group>
    <SideButton className="mt-[7px] h-[17px]" icon={<RefreshIcon />} text="刷新数据" />
    <SideButton className="mt-1.5 h-4" text="Cpk(单项)" />
    <label>
      <span className="mt-[3px] flex h-[11px] items-center text-[11px]">Cpk(单项)</span>
      <Combo value="Pk1" />
    </label>
    <hr className="-mx-[9px] mt-1 border-[#cfcfcf]" />
    <label>
      <span className="mt-1 flex h-[11px] items-center text-xs leading-none">打印机选择</span>
      <Combo value="Microsoft XPS" className="h-3 text-[11px]" />
    </label>
    <SideButton className="mt-[7px] h-[17px]" icon={<PrinterIcon />} text="打印" />
    <SideButton className="mt-1.5 h-4" text="导出(Word)" />
    <SideButton className="mt-2 h-4" text="导出(Excel)" />
    <hr className="-mx-[9px] mt-[5px] border-[#cfcfcf]" />
    <SideButton className="mt-2.5 h-[17px]" icon={<SaveIcon className="h-2.5 w-4" />} text="保存設置" />
    <SideButton className="mt-[9px] h-[18px]" icon={<BackIcon className="h-2 w-4" />} text="返回" />
  </Group>
);

const ReportWindow = () => (
  <Window
    edge="w-[3px] from-[#8b8f96] via-[#6f8296] via-27% to-[#2a86c6] to-29%"
    barClass="h-[13px] pl-[3px] from-[#8ea6c4] from-5% via-[#1c4f8a] via-22% to-[#1a4677]"
    title="text-[8px]"
    menuPad="pl-0.5"
    menuItem="w-[39px]"
    active={1}
  >
    <h2 className="flex h-6 items-center justify-center border-b-2 border-[#c4c4c4] pt-0.5 pr-[22px] text-xl leading-none text-[#222]">测试结果报表</h2>
    <div className="flex pt-1.5 pr-[7px] pl-2.5 text-[#222]">
      <ReportSidebar />
      <div className="mr-2.5 ml-[11px] w-[3px] shrink-0 bg-[#8f8f8f]" />
      <Group className="flex-1 px-[9px] text-[7px]">
        <h3 className="h-[27px] pt-1 pr-5 text-center text-[11px] font-bold text-black">{COMPANY}</h3>
        <table className="w-full table-fixed border-collapse bg-white">
          <tbody>
            {[
              ['Product Name:', 'Customer Name:'],
              ['Lot No.:', 'NO.of Samples:'],
              ['Operater:', 'Test Date: 2023-07-15 16:11:59'],
            ].map((row) => (
              <tr key={row[0]}>
                {row.map((value) => (
                  <td key={value} className="h-[9px] border border-[#b9b9bd] p-0 pl-0.5 leading-2">
                    {value}
                  </td>
                ))}
              </tr>
            ))}
          </tbody>
        </table>
        <p className="flex h-[9px] items-center bg-white pl-0.5 whitespace-pre">Description:  Force Range = 500g;Elong. Range = 3mm;Test Speed = 5mm/min</p>
        <ReportTable rows={REPORT_HEAD} cell="h-[8px] text-[8px] leading-[7px]" />
        <ReportTable rows={REPORT_ROWS} cell="h-[7px] leading-[6px]" thumb="h-[122px]" />
        <ReportTable rows={REPORT_STATS} cell="h-[7px] leading-[6px]" thumb="h-[43px]" />
        <div className="mt-0.5 grid grid-cols-3 border border-[#b9b9bd] bg-white leading-[7px]">
          <span className="pl-0.5">Tested by:</span>
          <span className="border-l border-[#b9b9bd] pl-0.5">Checked by:</span>
          <span className="border-l border-[#b9b9bd] pl-0.5">Approved by:</span>
        </div>
      </Group>
    </div>
  </Window>
);

const Caption = ({ className, children }: { className: string; children: ReactNode }) => (
  <figcaption className={clsx('text-center text-[39px] leading-10 font-bold text-black', className)}>{children}</figcaption>
);

export default function App() {
  return (
    <main className="min-h-screen bg-white font-['DejaVu_Sans','Noto_Sans_CJK_SC',sans-serif] leading-none">
      <div className="grid grid-cols-[793fr_884fr] items-start gap-x-[53px] px-4 pt-8">
        <figure>
          <RecipeWindow />
          <Caption className="mt-[22px]">配方界面</Caption>
        </figure>
        <figure className="pt-[3px]">
          <GraphWindow />
          <Caption className="mt-[19px] pl-[104px]">图形参数设置</Caption>
        </figure>
      </div>
      <div className="grid grid-cols-[775fr_887fr] items-start gap-x-[59px] pt-16 pr-[19px] pl-[22px]">
        <figure>
          <TestWindow />
          <Caption className="mt-[73px] pl-[7px]">测试画面</Caption>
        </figure>
        <figure className="pt-[7px]">
          <ReportWindow />
          <Caption className="mt-[73px] pl-[75px]">输出报表</Caption>
        </figure>
      </div>
    </main>
  );
}
